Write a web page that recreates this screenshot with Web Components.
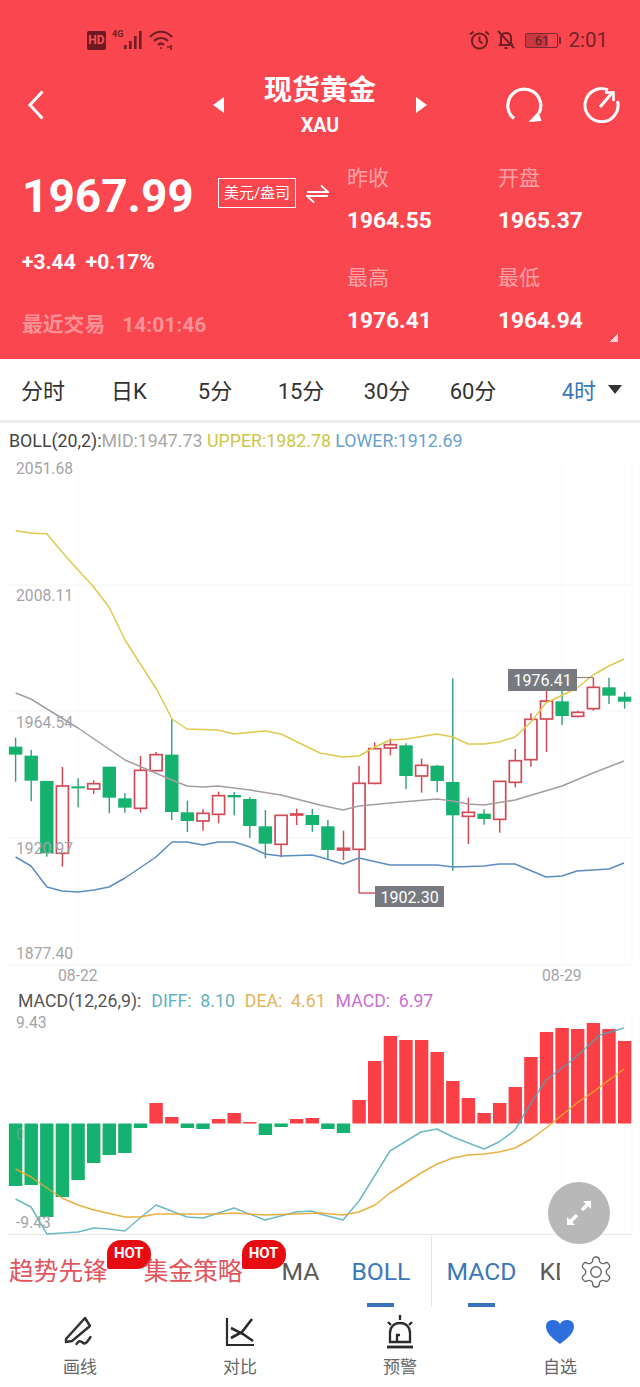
<!DOCTYPE html>
<html lang="zh">
<head>
<meta charset="utf-8">
<title>现货黄金</title>
<style>
  html, body { margin: 0; padding: 0; background: #fff; }
  body { font-family: Roboto, "Noto Sans CJK SC", sans-serif; }
  #app { position: relative; width: 640px; height: 1387px; overflow: hidden; }
</style>
</head>
<body>
<div id="app">
  <quote-header>
    <status-bar slot="status"></status-bar>
    <title-bar slot="title"></title-bar>
    <price-stat slot="stats" label="昨收">1964.55</price-stat>
    <price-stat slot="stats" label="开盘">1965.37</price-stat>
    <price-stat slot="stats" label="最高">1976.41</price-stat>
    <price-stat slot="stats" label="最低">1964.94</price-stat>
  </quote-header>
  <period-tabs></period-tabs>
  <boll-chart></boll-chart>
  <macd-chart></macd-chart>
  <indicator-bar></indicator-bar>
  <bottom-nav></bottom-nav>
  <expand-fab></expand-fab>
</div>

<script>
// candle x positions are one step apart, same step for both charts
const STEP = 15.615;
const xAt = i => 15.6 + i * STEP;
// y values below were read off the 3x crops, so convert back to page y
const py = v => 640 + v / 3;
const G = 1, R = 0;

// [isGreen, wickTop, wickBottom, bodyTop, bodyBottom]
const CANDLES = [
  [G,293,425,320,344],[G,330,484,347,422],[G,423,650,423,640],[R,381,680,438,640],
  [G,415,502,439,445],[R,421,462,431,447],[G,380,520,380,473],[G,460,518,475,503],
  [R,348,518,391,505],[R,336,392,344,392],[G,238,540,344,516],[G,482,576,517,543],
  [R,508,572,520,543],[R,455,550,467,523],[G,456,526,465,472],[G,472,594,477,558],
  [G,510,655,559,611],[R,525,652,526,613],[R,506,555,522,525],[G,507,575,525,555],
  [G,540,660,559,630],[R,572,660,625,630],[R,378,760,430,628],[R,307,433,326,430],
  [R,296,346,314,324],[G,310,447,316,408],[R,356,458,376,408],[G,375,457,377,423],
  [G,115,692,426,526],[R,473,612,517,529],[G,508,554,521,537],[R,423,578,424,538],
  [R,327,442,362,427],[R,220,380,238,359],[R,153,336,183,237],[G,153,255,184,228],
  [R,212,232,217,229],[R,112,212,142,206],[G,113,192,142,167],[G,156,206,170,185]
];

const UPPER = [[15.6,530.7],[31,533],[47,534],[62,552],[78,570],[92,585],[109,607],[125,640],[157,690],[172,719],[187,729],[218,730],[234,734],[265,731],[281,734],[320,753],[343,757],[359,756],[375,747],[390,740],[406,739],[437,734],[453,737],[468,744],[484,744],[499,742],[515,737],[531,722],[546,703],[577,688],[593,675],[609,666],[624,659]];
const MID = [[15.6,693],[31,699],[47,709],[78,728],[125,760],[172,780],[187,786],[203,787],[218,786],[250,790],[281,795],[320,805],[343,810],[359,806],[390,803],[437,799],[453,801],[468,804],[484,805],[515,800],[562,786],[593,773],[624,761]];
const LOWER = [[15.6,857],[31,866],[47,887],[62,891],[78,892],[94,890],[109,887],[125,878],[156,857],[172,842],[187,842],[203,845],[218,842],[234,842],[250,847],[265,854],[281,856],[312,855],[320,857],[343,864],[359,858],[390,865],[437,865],[453,867],[484,866],[499,864],[515,864],[546,877],[562,876],[577,871],[609,869],[624,863]];

// end of each histogram bar, page y; zero line sits at 1123.5
const MACD_BARS = [1186,1185,1217,1197,1180,1163,1155,1153,1128,1103,1117,1128,1129,1119,1113,1122,1135,1127,1119,1118,1129,1133,1100,1061,1036,1040,1040,1052,1081,1098,1113,1103,1087,1057,1032,1028,1029,1023,1029,1041];
const DIFF = [[15.6,1199],[31,1207],[47,1234],[78,1232],[94,1228],[109,1229],[125,1231],[140,1218],[156,1205],[187,1217],[203,1218],[234,1208],[265,1220],[296,1212],[312,1211],[320,1214],[343,1220],[359,1201],[390,1151],[421,1132],[437,1129],[453,1137],[484,1149],[499,1142],[515,1130],[531,1103],[546,1080],[554,1074],[570,1062],[587,1047],[600,1035],[617,1030],[624,1028]];
const DEA = [[15.6,1169],[31,1177],[47,1188],[62,1198],[78,1205],[94,1210],[125,1217],[140,1217],[156,1214],[187,1214],[218,1214],[234,1213],[265,1215],[296,1214],[320,1213],[343,1215],[359,1212],[375,1205],[390,1193],[421,1173],[437,1164],[453,1158],[468,1155],[484,1154],[499,1152],[515,1148],[531,1139],[546,1128],[562,1115],[577,1103],[593,1092],[609,1080],[624,1069]];

const pts = arr => arr.map(p => p.join(',')).join(' ');
const line = (arr, color, extra = '') => `<polyline points="${pts(arr)}" fill="none" stroke="${color}" stroke-width="1.5" stroke-linejoin="round" ${extra}/>`;

class StatusBar extends HTMLElement {
  connectedCallback() {
    this.attachShadow({ mode: 'open' });
    this.shadowRoot.innerHTML = `
      <style>
        :host { display: flex; height: 76px; box-sizing: border-box; padding: 4px 32px 0 87px; justify-content: space-between; align-items: center; color: #6e1f25; }
        .group { display: flex; align-items: center; }
        svg { display: block; }
        .hd { width: 19px; height: 19px; background: #6e1a20; color: #f4555c; border-radius: 2px; font: 700 12px/19px Roboto, sans-serif; text-align: center; }
        .net { font: 700 9px/10px Roboto, sans-serif; align-self: flex-start; margin: -1px 0 0 6px; width: 12px; }
        .batt { position: relative; width: 33px; height: 15px; box-sizing: border-box; border: 1px solid #7a2a30; border-radius: 2px; background: linear-gradient(to right, #c9383f 0 72%, transparent 72%); font: 400 13px/13px Roboto, sans-serif; text-align: center; color: #5e1a1f; }
        .nub { width: 2px; height: 7px; background: #7a2a30; margin: 0 7px 0 1px; }
        .time { font: 400 20.5px/24px Roboto, sans-serif; color: #74242a; }
      </style>
      <div class="group">
        <div class="hd">HD</div>
        <div class="net">4G</div>
        <svg width="21" height="20" viewBox="0 0 21 20" fill="#6e1f25" style="margin-right:4px"><rect x="0" y="15" width="2.6" height="4"/><rect x="5" y="11" width="2.6" height="8"/><rect x="10" y="6" width="2.6" height="13"/><rect x="15" y="1" width="2.6" height="18"/></svg>
        <svg width="25" height="20" viewBox="0 0 25 20" fill="none" stroke="#6e1f25" stroke-width="2.2"><path d="M1 7c6-7 16-7 22 0"/><path d="M5 11c4-4 10-4 14 0"/><path d="M9 15c2-2 4-2 6 0"/><circle cx="12" cy="18" r="1" fill="#6e1f25" stroke="none"/><path d="M18 17h3M22 15v5" stroke-width="1.6"/></svg>
      </div>
      <div class="group">
        <svg width="21" height="20" viewBox="0 0 21 20" fill="none" stroke="#6e1f25" stroke-width="2" style="margin-right:7px"><circle cx="10.5" cy="11" r="7.6"/><path d="M10.5 6.5V11l3 2.5M1 4.5 4.5 1.5M20 4.5 16.5 1.5"/></svg>
        <svg width="18" height="20" viewBox="0 0 18 20" fill="none" stroke="#6e1f25" stroke-width="2" style="margin-right:10px"><path d="M4 14V8c0-3 2-5 5-5s5 2 5 5v6l2 1H2zM7.5 18h3M1 1l16 17"/></svg>
        <div class="batt">61</div>
        <div class="nub"></div>
        <div class="time">2:01</div>
      </div>
    `;
  }
}

class TitleBar extends HTMLElement {
  connectedCallback() {
    this.attachShadow({ mode: 'open' });
    this.shadowRoot.innerHTML = `
      <style>
        :host { display: grid; grid-template-columns: 1fr auto 1fr; height: 58px; align-items: center; color: #fff; box-sizing: border-box; padding: 0 20px; }
        svg { display: block; }
        .back { margin: -4px 0 0 7px; }
        .center { display: flex; justify-content: center; align-items: center; gap: 39px; }
        .center svg { margin-top: -4px; }
        .name { display: flex; flex-direction: column; align-items: center; width: 114px; margin-top: -2px; }
        .cn { font: 700 28px/34px Roboto, "Noto Sans CJK SC", sans-serif; white-space: nowrap; }
        .en { font: 700 19.5px/24px Roboto, sans-serif; margin-top: 6px; }
        .actions { display: flex; gap: 39px; justify-content: flex-end; margin-top: -5px; }
      </style>
      <svg class="back" width="18" height="30" viewBox="0 0 18 30" fill="none" stroke="#fff" stroke-width="3"><path d="M15.5 1.5 3 15l12.5 13.5"/></svg>
      <div class="center">
        <svg width="11" height="16" viewBox="0 0 11 16" fill="#fff"><path d="M11 0v16L0 8z"/></svg>
        <div class="name"><span class="cn">现货黄金</span><span class="en">XAU</span></div>
        <svg width="11" height="16" viewBox="0 0 11 16" fill="#fff"><path d="M0 0v16l11-8z"/></svg>
      </div>
      <div class="actions">
        <svg width="38" height="36" viewBox="0 0 38 36" fill="none" stroke="#fff" stroke-width="3.2"><path d="M8 31.5A16.5 16.5 0 1 1 33 26"/><path d="M22.5 35 35.5 34 32.500 24.500z" fill="#fff" stroke="none"/></svg>
        <svg width="37" height="36" viewBox="0 0 37 36" fill="none" stroke="#fff" stroke-width="3"><path d="M25 3A16.500 16.500 0 1 0 34.500 14"/><path d="M17 20 29 6"/><path d="M22 5.500h8.500V14" stroke-width="2.600"/></svg>
      </div>
    `;
  }
}

class PriceStat extends HTMLElement {
  connectedCallback() {
    this.attachShadow({ mode: 'open' });
    this.shadowRoot.innerHTML = `
      <style>
        :host { display: block; height: 100px; color: #fff; }
        .label { font: 400 21px/30px Roboto, "Noto Sans CJK SC", sans-serif; color: rgba(255,255,255,.5); }
        .value { font: 700 22.7px/30px Roboto, sans-serif; margin-top: 13px; }
      </style>
      <div class="label">${this.getAttribute('label')}</div>
      <div class="value"><slot></slot></div>
    `;
  }
}

class QuoteHeader extends HTMLElement {
  connectedCallback() {
    this.attachShadow({ mode: 'open' });
    this.shadowRoot.innerHTML = `
      <style>
        :host { display: block; position: relative; height: 359px; background: #fa464e; color: #fff; }
        .quote { display: grid; grid-template-columns: 325px 1fr; padding: 29px 0 0 22px; }
        .price-row { display: flex; align-items: center; margin-top: 7px; height: 50px; }
        .price { font: 700 46px/50px Roboto, sans-serif; width: 196px; position: relative; top: 1px; }
        .tag { border: 1px solid #fff; height: 28px; width: 76px; font: 400 15px/28px Roboto, "Noto Sans CJK SC", sans-serif; text-align: center; white-space: nowrap; margin-top: -4px; }
        svg.swap { display: block; margin-left: 10px; }
        .change { font: 700 21px/30px Roboto, sans-serif; margin-top: 27px; display: flex; gap: 10px; }
        .trade { margin-top: 33px; height: 30px; display: flex; align-items: center; gap: 17px; color: rgba(255,255,255,.42); font-weight: 700; line-height: 30px; }
        .trade .cn { font-size: 20.800px; font-family: Roboto, "Noto Sans CJK SC", sans-serif; }
        .trade .t { font-size: 21px; }
        .stats { display: grid; grid-template-columns: 151px 1fr; }
        .corner { position: absolute; right: 22px; bottom: 17px; width: 8px; height: 8px; background: linear-gradient(135deg, transparent 50%, rgba(255,255,255,.75) 50%); }
      </style>
      <slot name="status"></slot>
      <slot name="title"></slot>
      <div class="quote">
        <div>
          <div class="price-row">
            <div class="price">1967.99</div>
            <div class="tag">美元/盎司</div>
            <svg class="swap" width="23" height="20" viewBox="0 0 23 20" fill="none" stroke="#fff" stroke-width="1.800" style="margin-top:-3px"><path d="M1 8h21L15 1.500M22 12H1l7 6.500"/></svg>
          </div>
          <div class="change"><span>+3.44</span><span>+0.17%</span></div>
          <div class="trade"><span class="cn">最近交易</span><span class="t">14:01:46</span></div>
        </div>
        <div class="stats"><slot name="stats"></slot></div>
      </div>
      <div class="corner"></div>
    `;
  }
}

class PeriodTabs extends HTMLElement {
  connectedCallback() {
    this.attachShadow({ mode: 'open' });
    const periods = ['分时', '日K', '5分', '15分', '30分', '60分'];
    this.shadowRoot.innerHTML = `
      <style>
        :host { display: flex; height: 64px; box-sizing: border-box; border-bottom: 3px solid #eeeeee; align-items: center; font: 400 22px/30px Roboto, "Noto Sans CJK SC", sans-serif; color: #333; padding-top: 5px; }
        .tab { width: 86px; text-align: center; }
        .tab:first-child { margin-left: -1px; }
        .current { margin-left: auto; display: flex; align-items: center; color: #3a77b6; padding-right: 18px; gap: 12px; }
        .arrow { width: 0; height: 0; border: 7px solid transparent; border-top: 9px solid #333; border-bottom: 0; margin-top: -6px; }
      </style>
      ${periods.map(p => `<div class="tab">${p}</div>`).join('')}
      <div class="current"><span>4时</span><div class="arrow"></div></div>
    `;
  }
}

class BollChart extends HTMLElement {
  connectedCallback() {
    this.attachShadow({ mode: 'open' });
    const candles = CANDLES.map((c, i) => {
      const x = xAt(i).toFixed(1);
      const [green, wt, wb, bt, bb] = c;
      const y1 = py(bt), y2 = py(bb);
      if (green) {
        return `<line x1="${x}" x2="${x}" y1="${py(wt)}" y2="${py(wb)}" stroke="#2f9f78" stroke-width="1.400"/>
          <rect x="${x - 6.700}" y="${y1}" width="13.400" height="${y2 - y1}" fill="#15b26f"/>`;
      }
      return `<line x1="${x}" x2="${x}" y1="${py(wt)}" y2="${py(wb)}" stroke="#cf4c56" stroke-width="1.500"/>
        <rect x="${x - 6}" y="${y1}" width="12" height="${y2 - y1}" fill="#fff" stroke="#d24c57" stroke-width="1.700"/>`;
    }).join('');
    const grid = [585, 711, 838, 965].map(y => `<line x1="8" x2="632" y1="${y}" y2="${y}" stroke="#f6f6f6"/>`).join('')
      + [78, 562, 632].map(x => `<line x1="${x}" x2="${x}" y1="459" y2="965" stroke="#f9f9f9"/>`).join('');
    const axis = [['2051.68', 474], ['2008.11', 601], ['1964.54', 728], ['1920.97', 854], ['1877.40', 959]]
      .map(a => `<text x="16" y="${a[1]}">${a[0]}</text>`).join('');
    this.shadowRoot.innerHTML = `
      <style>
        :host { display: block; height: 567px; }
        .legend { height: 36px; box-sizing: border-box; padding-left: 9px; font: 400 17.800px/36px Roboto, sans-serif; white-space: nowrap; color: #444; }
        .mid { color: #a8a8a8; } .up { color: #cdc648; } .low { color: #6aa2cf; }
        svg { display: block; }
        text { font: 400 15.700px Roboto, sans-serif; fill: #a4a4a8; }
        .tip { fill: #fff; font-size: 16px; }
      </style>
      <div class="legend">BOLL(20,2):<span class="mid">MID:1947.73</span> <span class="up">UPPER:1982.78</span> <span class="low">LOWER:1912.69</span></div>
      <svg width="640" height="531" viewBox="0 459 640 531">
        ${grid}
        ${candles}
        ${line(UPPER, '#e0c94f')}
        ${line(MID, '#a49ea2')}
        ${line(LOWER, '#5b8dc0')}
        ${axis}
        <text x="58" y="981">08-22</text>
        <text x="542" y="981">08-29</text>
        <path d="M577 677.500H593" stroke="#9a7f84" stroke-width="1.200"/>
        <rect x="508" y="669" width="69" height="22" fill="#777b80"/>
        <text class="tip" x="513.500" y="686">1976.41</text>
        <path d="M359 893H375" stroke="#cf4c56" stroke-width="1.400"/>
        <rect x="375" y="886" width="69" height="21" fill="#777b80"/>
        <text class="tip" x="380.500" y="902.500">1902.30</text>
      </svg>
    `;
  }
}

class MacdChart extends HTMLElement {
  connectedCallback() {
    this.attachShadow({ mode: 'open' });
    const ZERO = 1123.500;
    const bars = MACD_BARS.map((end, i) => {
      const x = xAt(i) - 6.700;
      const top = Math.min(end, ZERO), h = Math.abs(end - ZERO);
      return `<rect x="${x.toFixed(1)}" y="${top}" width="13.400" height="${h}" fill="${end > ZERO ? '#15b26f' : '#fb3f47'}"/>`;
    }).join('');
    this.shadowRoot.innerHTML = `
      <style>
        :host { display: block; height: 246px; }
        .legend { height: 22px; display: flex; padding-left: 18px; font: 400 17.700px/22px Roboto, sans-serif; white-space: nowrap; color: #555; gap: 10px; }
        .diff { color: #62b1bf; } .dea { color: #e4b45a; } .macd { color: #c96ed2; }
        svg { display: block; }
        text { font: 400 15.700px Roboto, sans-serif; fill: #a4a4a8; }
      </style>
      <div class="legend"><span>MACD(12,26,9):</span><span class="diff">DIFF:&nbsp; 8.10</span><span class="dea">DEA:&nbsp; 4.61</span><span class="macd">MACD:&nbsp; 6.97</span></div>
      <svg width="640" height="224" viewBox="0 1012 640 224">
        <line x1="562" x2="562" y1="1012" y2="1235" stroke="#f9f9f9"/>
        <line x1="632" x2="632" y1="1012" y2="1235" stroke="#f9f9f9"/>
        <line x1="8" x2="632" y1="1234.500" y2="1234.500" stroke="#e8e8e8"/>
        ${bars}
        ${line(DIFF, '#47a9b8', 'opacity=".8"')}
        ${line(DEA, '#e6a92f', 'opacity=".9"')}
        <text x="16" y="1028">9.43</text>
        <text x="16" y="1140" style="opacity:.45">0</text>
        <text x="16" y="1228">-9.43</text>
      </svg>
    `;
  }
}

class IndicatorTab extends HTMLElement {
  connectedCallback() {
    this.attachShadow({ mode: 'open' });
    const hot = this.hasAttribute('hot');
    this.shadowRoot.innerHTML = `
      <style>
        :host { display: block; position: relative; font: 400 24.700px/34px Roboto, "Noto Sans CJK SC", sans-serif; color: #5a5a5a; white-space: nowrap; }
        :host([promo]) { color: #e2555d; }
        :host([active]) { color: #3b78b8; }
        :host([active])::after { content: ""; position: absolute; left: 50%; bottom: -18px; width: 27px; height: 4px; margin-left: -13.500px; background: #3a72bd; }
        .hot { position: absolute; left: 100%; top: -15px; margin-left: -1px; width: 44px; height: 29px; border-radius: 14px 14px 14px 2px; background: #e70b12; color: #fff; font: 700 15px/26px Roboto, sans-serif; text-align: center; }
      </style>
      <slot></slot>${hot ? '<div class="hot">HOT</div>' : ''}
    `;
  }
}

class IndicatorBar extends HTMLElement {
  connectedCallback() {
    this.attachShadow({ mode: 'open' });
    this.shadowRoot.innerHTML = `
      <style>
        :host { display: flex; height: 71px; box-sizing: border-box; padding-left: 9px; align-items: center; background: #fff; }
        indicator-tab.cut { width: 21px; overflow: hidden; }
        .divider { width: 1px; align-self: stretch; background: #e6e6e6; margin: 0 14px 0 21px; }
        svg { display: block; margin-left: 18px; }
      </style>
      <indicator-tab promo hot style="margin-right:36px">趋势先锋</indicator-tab>
      <indicator-tab promo hot style="margin-right:39px">集金策略</indicator-tab>
      <indicator-tab style="margin-right:32px">MA</indicator-tab>
      <indicator-tab active>BOLL</indicator-tab>
      <div class="divider"></div>
      <indicator-tab active style="margin-right:23px">MACD</indicator-tab>
      <indicator-tab class="cut">KDJ</indicator-tab>
      <svg width="36" height="38" viewBox="0 0 24 24" fill="none" stroke="#666" stroke-width=".9"><path d="M12.220 2h-.44a2 2 0 0 0-2 2v.18a2 2 0 0 1-1 1.730l-.43.25a2 2 0 0 1-2 0l-.15-.08a2 2 0 0 0-2.730.73l-.22.38a2 2 0 0 0 .73 2.730l.15.1a2 2 0 0 1 1 1.720v.51a2 2 0 0 1-1 1.740l-.15.09a2 2 0 0 0-.73 2.730l.22.38a2 2 0 0 0 2.730.73l.15-.08a2 2 0 0 1 2 0l.43.25a2 2 0 0 1 1 1.730V20a2 2 0 0 0 2 2h.44a2 2 0 0 0 2-2v-.18a2 2 0 0 1 1-1.730l.43-.25a2 2 0 0 1 2 0l.15.08a2 2 0 0 0 2.730-.73l.22-.39a2 2 0 0 0-.73-2.730l-.15-.08a2 2 0 0 1-1-1.740v-.5a2 2 0 0 1 1-1.740l.15-.09a2 2 0 0 0 .73-2.730l-.22-.38a2 2 0 0 0-2.730-.73l-.15.08a2 2 0 0 1-2 0l-.43-.25a2 2 0 0 1-1-1.730V4a2 2 0 0 0-2-2z"/><circle cx="12" cy="12" r="3.500"/></svg>
    `;
  }
}

class BottomNav extends HTMLElement {
  connectedCallback() {
    this.attachShadow({ mode: 'open' });
    const items = [
      ['画线', `<svg width="32" height="32" viewBox="0 0 32 32" fill="none" stroke="#333" stroke-width="2.500" stroke-linejoin="round" stroke-linecap="round"><path d="M2 23 21 2l5 8L8 25l-6 1z"/><path d="M12.500 28c2-3.500 4-3.500 6-1.500s4 1 8-5.500"/></svg>`],
      ['对比', `<svg width="32" height="32" viewBox="0 0 32 32" fill="none" stroke="#2b2b2b" stroke-width="2.200"><path d="M3 2v27h27"/><path d="M7 22l11-6 10-13M7 12l12 6 10 7" stroke-width="2.600"/></svg>`],
      ['预警', `<svg width="32" height="34" viewBox="0 0 32 34" fill="none" stroke="#2b2b2b" stroke-width="2.300"><path d="M16 0v5M4 7l3 3M28 7l-3 3"/><path d="M6 27V18C6 12 10 8 16 8s10 4 10 10v9zM13 27V20h3"/><path d="M3 32h26" stroke-width="2.800"/></svg>`],
      ['自选', `<svg width="32" height="32" viewBox="0 0 32 32" fill="#2f6fdd"><path d="M16 28C8 22 2 17 2 10.500 2 6 5.500 4 9 4c3 0 5.500 1.500 7 4 1.500-2.500 4-4 7-4 3.500 0 7 2 7 6.500C30 17 24 22 16 28z"/></svg>`]
    ];
    this.shadowRoot.innerHTML = `
      <style>
        :host { display: grid; grid-template-columns: repeat(4, 1fr); height: 80px; background: #fff; position: relative; }
        .item { display: flex; flex-direction: column; align-items: center; }
        .icon { height: 34px; margin-top: 8px; display: flex; align-items: center; }
        svg { display: block; }
        .label { font: 400 17px/24px Roboto, "Noto Sans CJK SC", sans-serif; color: #666; margin-top: 6px; }
      </style>
      ${items.map(i => `<div class="item"><div class="icon">${i[1]}</div><div class="label">${i[0]}</div></div>`).join('')}
    `;
  }
}

class ExpandFab extends HTMLElement {
  connectedCallback() {
    this.attachShadow({ mode: 'open' });
    this.shadowRoot.innerHTML = `
      <style>
        :host { position: absolute; left: 548px; top: 1182px; width: 62px; height: 62px; border-radius: 50%; background: #b8b8b8; display: flex; align-items: center; justify-content: center; }
        svg { display: block; }
      </style>
      <svg width="30" height="30" viewBox="0 0 30 30" fill="none" stroke="#fff" stroke-width="3.500"><path d="M18 12 26 4M5 25l8-8"/><path d="M19 3h8v8z M3 19v8h8z" fill="#fff" stroke="none"/></svg>
    `;
  }
}

customElements.define('status-bar', StatusBar);
customElements.define('title-bar', TitleBar);
customElements.define('price-stat', PriceStat);
customElements.define('quote-header', QuoteHeader);
customElements.define('period-tabs', PeriodTabs);
customElements.define('boll-chart', BollChart);
customElements.define('macd-chart', MacdChart);
customElements.define('indicator-tab', IndicatorTab);
customElements.define('indicator-bar', IndicatorBar);
customElements.define('bottom-nav', BottomNav);
customElements.define('expand-fab', ExpandFab);
</script>
</body>
</html>
